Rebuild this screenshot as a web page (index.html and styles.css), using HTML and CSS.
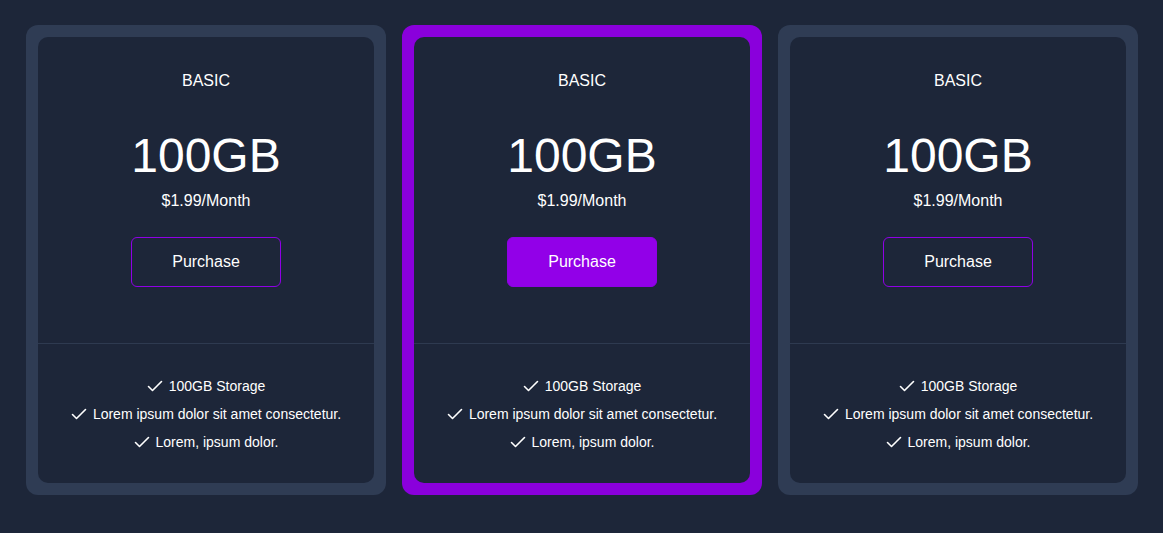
FILE: index.html
```html
<!DOCTYPE html>
<html>
<head>
<meta charset="utf-8">
<link rel="stylesheet" href="styles.css">
</head>
<body>
<div class="plans">
  <div class="plan">
    <div class="card">
      <div class="head">
        <div class="tier">BASIC</div>
        <div class="size">100GB</div>
        <div class="price">$1.99/Month</div>
        <button class="buy">Purchase</button>
      </div>
      <ul class="features">
        <li><svg viewBox="0 0 16 16"><path d="M1.5 8.5 L5.5 12.5 L14.5 3.5"/></svg>100GB Storage</li>
        <li><svg viewBox="0 0 16 16"><path d="M1.5 8.5 L5.5 12.5 L14.5 3.5"/></svg>Lorem ipsum dolor sit amet consectetur.</li>
        <li><svg viewBox="0 0 16 16"><path d="M1.5 8.5 L5.5 12.5 L14.5 3.5"/></svg>Lorem, ipsum dolor.</li>
      </ul>
    </div>
  </div>
  <div class="plan featured">
    <div class="card">
      <div class="head">
        <div class="tier">BASIC</div>
        <div class="size">100GB</div>
        <div class="price">$1.99/Month</div>
        <button class="buy">Purchase</button>
      </div>
      <ul class="features">
        <li><svg viewBox="0 0 16 16"><path d="M1.5 8.5 L5.5 12.5 L14.5 3.5"/></svg>100GB Storage</li>
        <li><svg viewBox="0 0 16 16"><path d="M1.5 8.5 L5.5 12.5 L14.5 3.5"/></svg>Lorem ipsum dolor sit amet consectetur.</li>
        <li><svg viewBox="0 0 16 16"><path d="M1.5 8.5 L5.5 12.5 L14.5 3.5"/></svg>Lorem, ipsum dolor.</li>
      </ul>
    </div>
  </div>
  <div class="plan">
    <div class="card">
      <div class="head">
        <div class="tier">BASIC</div>
        <div class="size">100GB</div>
        <div class="price">$1.99/Month</div>
        <button class="buy">Purchase</button>
      </div>
      <ul class="features">
        <li><svg viewBox="0 0 16 16"><path d="M1.5 8.5 L5.5 12.5 L14.5 3.5"/></svg>100GB Storage</li>
        <li><svg viewBox="0 0 16 16"><path d="M1.5 8.5 L5.5 12.5 L14.5 3.5"/></svg>Lorem ipsum dolor sit amet consectetur.</li>
        <li><svg viewBox="0 0 16 16"><path d="M1.5 8.5 L5.5 12.5 L14.5 3.5"/></svg>Lorem, ipsum dolor.</li>
      </ul>
    </div>
  </div>
</div>
</body>
</html>
```

FILE: styles.css
```css
html, body {
  margin: 0;
  padding: 0;
  background: #1d2639;
  font-family: "Liberation Sans", Arial, sans-serif;
  color: #ffffff;
}

.plans {
  display: flex;
  justify-content: center;
  gap: 16px;
  padding-top: 25px;
  padding-left: 1px;
}

.plan {
  width: 360px;
  box-sizing: border-box;
  padding: 12px;
  background: #2f3c54;
  border-radius: 12px;
}

.plan.featured {
  background: #8a00dc;
}

.card {
  background: #1d2639;
  border-radius: 10px;
  display: flex;
  flex-direction: column;
}

.head {
  display: flex;
  flex-direction: column;
  align-items: center;
  padding: 35px 0 56px;
  border-bottom: 1px solid #2e3a50;
}

.tier {
  font-size: 16px;
  line-height: 18px;
}

.size {
  font-size: 48px;
  line-height: 56px;
  margin-top: 38px;
}

.price {
  font-size: 16px;
  line-height: 18px;
  margin-top: 8px;
}

.buy {
  margin-top: 27px;
  width: 150px;
  height: 50px;
  background: transparent;
  border: 1px solid #8f00e6;
  border-radius: 6px;
  color: #ffffff;
  font-family: inherit;
  font-size: 16px;
  cursor: pointer;
}

.featured .buy {
  background: #9200e8;
}

.features {
  list-style: none;
  margin: 0;
  padding: 28px 0 27px;
  display: flex;
  flex-direction: column;
  align-items: center;
}

.features li {
  display: flex;
  align-items: center;
  gap: 6px;
  font-size: 14px;
  line-height: 28px;
}

.features svg {
  width: 16px;
  height: 16px;
  fill: none;
  stroke: #ffffff;
  stroke-width: 1.6;
  stroke-linecap: round;
  stroke-linejoin: round;
}
```
